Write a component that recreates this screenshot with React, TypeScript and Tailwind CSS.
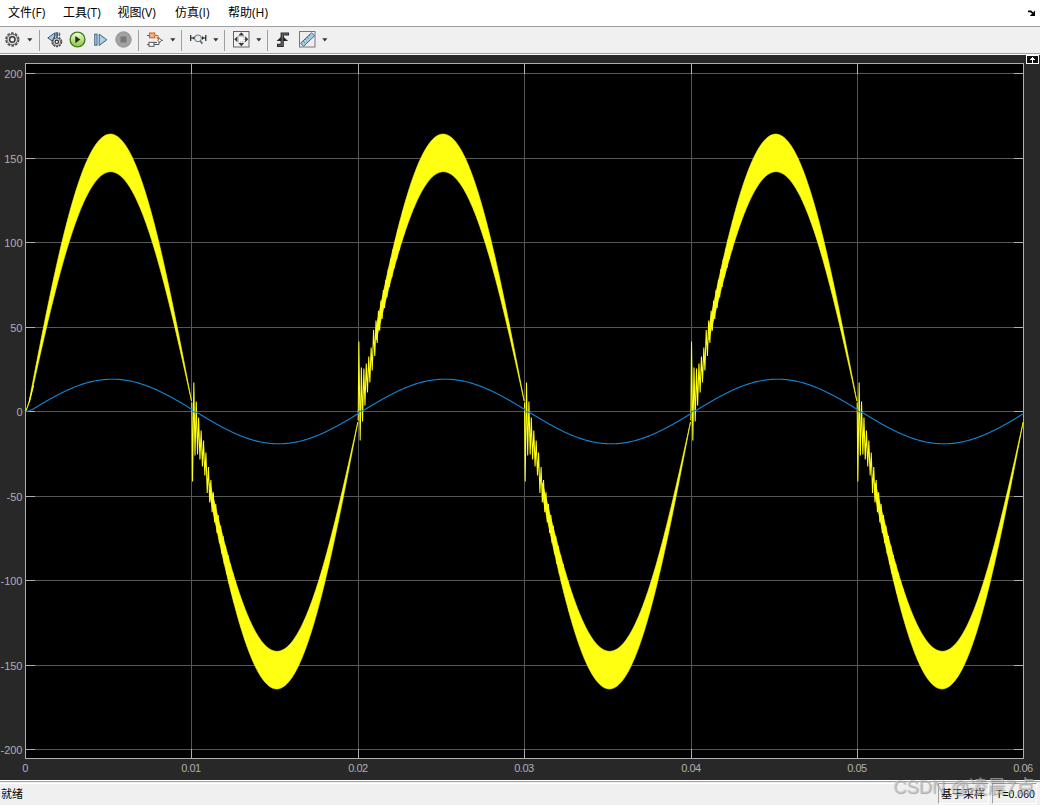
import React from "react";

const X0 = 25.5;
const Y0 = 411.5;
const HALF = 166.33;

type Pt = [number, number];

const path = (pts: Pt[]) =>
  pts.map(([x, y], i) => `${i ? "L" : "M"}${x.toFixed(2)} ${y.toFixed(2)}`).join("");

const wave = (amp: number, dx: number, shift: number) =>
  amp * Math.sin((Math.PI * (dx - shift)) / HALF);

const RINGING: Pt[] = [
  [0, -9], [0.7, 70], [2, -29], [3.2, 44], [4.4, -10], [5.7, 43], [6.8, 6],
  [8.1, 48], [9.3, 19], [10.6, 55], [11.7, 29], [13, 64], [14.1, 41],
];

function halfCycle(n: number) {
  const sign = n % 2 === 0 ? -1 : 1;
  const left = X0 + n * HALF;
  const start = n === 0 ? 4 : 18;
  const outer: Pt[] = [];
  const inner: Pt[] = [];
  for (let d = start; d <= HALF; d += 0.5) {
    outer.push([left + d, Y0 + sign * wave(277.4, d, 1.7)]);
    inner.push([left + d, Y0 + sign * wave(239.8, d, 2)]);
  }
  const band = path([...outer, ...inner.reverse()]) + "Z";
  const line: Pt[] = [];
  if (n === 0) {
    line.push([left, Y0], [left + 2, Y0 - 4.5], [left + 4, Y0 - 11], [left + 8, Y0 - 26]);
  } else {
    RINGING.forEach(([d, v]) => line.push([left + d, Y0 + sign * v]));
    let k = 0;
    for (let d = 15.4; d < 46; d += 1.22) {
      const swing = 17 * Math.sin((Math.PI * d) / HALF) + 12 * Math.exp(-(d - 15) / 9);
      line.push([left + d, Y0 + sign * (wave(258, d, 1.9) + (k % 2 ? -swing : swing))]);
      k++;
    }
  }
  return { band, line: path(line) };
}

const halves = [0, 1, 2, 3, 4, 5].map(halfCycle);

const current: Pt[] = [];
for (let n = 0; n < 6; n++) {
  const sign = n % 2 === 0 ? -1 : 1;
  const left = X0 + n * HALF;
  if (n === 0) current.push([left, Y0], [left + 3, Y0 - 0.5], [left + 7, Y0 - 2]);
  else current.push([left, Y0 - sign * 2.4], [left + 1, Y0], [left + 4, Y0 + sign * 0.6]);
  for (let d = n === 0 ? 9 : 6; d < HALF; d += 1)
    current.push([left + d, Y0 + sign * wave(32.3, d, 3.6)]);
}
current.push([X0 + 6 * HALF, Y0 + 2.5]);

const yTicks: [string, number][] = [
  ["200", 73.5], ["150", 158.5], ["100", 242.5], ["50", 327.5], ["0", 411.5],
  ["-50", 496.5], ["-100", 580.5], ["-150", 665.5], ["-200", 749.5],
];
const xTicks: [string, number][] = [
  ["0", 25.5], ["0.01", 191.5], ["0.02", 358.5], ["0.03", 524.5],
  ["0.04", 691.5], ["0.05", 857.5], ["0.06", 1023.5],
];

function Scope() {
  return (
    <svg width="1040" height="725" viewBox="0 55 1040 725" className="block bg-[#282828]">
      <rect x="25" y="63" width="999" height="696" fill="#000" />
      <g stroke="#565656" shapeRendering="crispEdges">
        {yTicks.map(([t, y]) => <path key={t} d={`M26 ${y}H1023`} />)}
        {xTicks.slice(1, 6).map(([t, x]) => <path key={t} d={`M${x} 64V758`} />)}
      </g>
      <g stroke="#afafaf" fill="none" shapeRendering="crispEdges">
        {yTicks.map(([t, y]) => <path key={t} d={`M26 ${y}h9M1023 ${y}h-9`} />)}
        {xTicks.slice(1, 6).map(([t, x]) => <path key={t} d={`M${x} 64v10M${x} 758v-9`} />)}
        <rect x="25.5" y="63.5" width="998" height="695" />
      </g>
      {halves.map((h, i) => (
        <g key={i} stroke="#ffff11" strokeLinejoin="bevel">
          <path d={h.band} fill="#ffff11" strokeWidth=".7" />
          <path d={h.line} fill="none" strokeWidth="1.05" />
        </g>
      ))}
      <path d={path(current)} fill="none" stroke="#1483cf" strokeWidth="1.15" />
      <g fill="#afafaf" fontSize="11" fontFamily="'Liberation Sans', Arial, sans-serif">
        {yTicks.map(([t, y]) => <text key={t} x="22.5" y={y + 4} textAnchor="end">{t}</text>)}
        {xTicks.map(([t, x]) => <text key={t} x={x - 0.3} y="772" textAnchor="middle" textLength={t === "0" ? undefined : 20}>{t}</text>)}
      </g>
      <g shapeRendering="crispEdges">
        <rect x="1026.5" y="55.5" width="12" height="8" fill="#111" stroke="#fff" />
        <path d="M1032.5 57v6M1031 58.5h3M1030 59.5h5" stroke="#fff" fill="none" />
      </g>
    </svg>
  );
}

function Caret({ className }: { className: string }) {
  return (
    <svg width="6" height="4" viewBox="0 0 6 4" className={`shrink-0 ${className}`}>
      <path d="M.2 .2h5.2L2.8 3.4z" fill="#333" />
    </svg>
  );
}

function Sep({ className }: { className: string }) {
  return <div className={`h-[21px] w-px shrink-0 bg-[#a0a0a0] ${className}`} />;
}

function Gear() {
  return (
    <svg width="15" height="15" viewBox="0 0 15 15" className="mb-[2px] ml-[5px]">
      <circle cx="7.3" cy="7.5" r="6.3" fill="none" stroke="#555" strokeWidth="1.7" strokeDasharray="2.7 1.25" />
      <circle cx="7.3" cy="7.5" r="5.3" fill="#d9d9d9" stroke="#606060" />
      <circle cx="7.3" cy="7.5" r="2.7" fill="#f2f2f2" stroke="#3a3a3a" strokeWidth="1.5" />
    </svg>
  );
}

function Toolbar() {
  return (
    <div className="flex h-[26px] items-center bg-[#f0f0f0]">
      <Gear />
      <Caret className="mb-px ml-[6.5px]" />
      <Sep className="ml-[6.5px]" />
      <svg width="16" height="16" viewBox="0 0 16 16" className="mb-px ml-[7px]">
        <path d="M.8 6L7.5 1v9.5z" fill="#a9cbe2" stroke="#345e80" />
        <path d="M9 4.5V.8h1.5v3.5M12.5 4V.8" fill="none" stroke="#345e80" strokeWidth="1.3" />
        <circle cx="9.8" cy="9.8" r="4.7" fill="none" stroke="#4b4b4b" strokeWidth="1.5" strokeDasharray="2 .95" />
        <circle cx="9.8" cy="9.8" r="3.9" fill="#d8d8d8" stroke="#555" strokeWidth=".9" />
        <circle cx="9.8" cy="9.8" r="1.7" fill="#fff" stroke="#303030" strokeWidth="1.2" />
      </svg>
      <svg width="17" height="17" viewBox="0 0 17 17" className="mb-px ml-[6px]">
        <defs>
          <linearGradient id="play" x1="0" y1="0" x2="0" y2="1">
            <stop offset="0" stopColor="#f5ffe9" /><stop offset=".55" stopColor="#b5df7c" /><stop offset="1" stopColor="#8cca48" />
          </linearGradient>
        </defs>
        <circle cx="8.5" cy="8.5" r="7.4" fill="url(#play)" stroke="#487b1c" strokeWidth="1.4" />
        <path d="M6.3 4.9l5 3.6-5 3.7z" fill="#202b1c" />
      </svg>
      <svg width="14" height="14" viewBox="0 0 14 14" className="mb-px ml-[7.5px]">
        <rect x=".8" y="1.2" width="2.2" height="11" fill="#b5d7ec" stroke="#345e80" />
        <path d="M5.2 1.2v11.2l7.6-5.6z" fill="#b0d2e9" stroke="#345e80" />
      </svg>
      <svg width="17" height="17" viewBox="0 0 17 17" className="mb-px ml-[7px]">
        <circle cx="8.5" cy="8.5" r="7.7" fill="#a2a2a2" stroke="#929292" />
        <rect x="5.5" y="5.5" width="6" height="6" fill="#777" />
      </svg>
      <Sep className="ml-[6px]" />
      <svg width="16" height="16" viewBox="0 0 16 16" className="mb-px ml-[8px]">
        <path d="M0 3.5h2M0 12.5h2M7 12.5h5v-3" stroke="#555" fill="none" />
        <path d="M8 3.5h3V6" stroke="#c76223" fill="none" />
        <rect x="2.5" y="1" width="5.3" height="4.8" fill="#fbb171" stroke="#c85f1d" />
        <rect x="2" y="10.3" width="5" height="4" fill="#fff" stroke="#555" />
        <path d="M12.7 6.3l1.8 2-1.8 2-1.8-2z" fill="#fff" stroke="#555" />
        <path d="M14.5 8.3H16M7 10.5h3" stroke="#555" />
        <path d="M9 5.5h4l-2 2z" fill="#c85f1d" />
      </svg>
      <Caret className="mb-px ml-[7px]" />
      <Sep className="ml-[5px]" />
      <svg width="17" height="14" viewBox="0 0 17 14" className="ml-[8px]">
        <path d="M.7 2v6M15.8 2v6M1 5h3.5M12 5h4" stroke="#222" strokeWidth="1.2" />
        <path d="M4.5 3v4L2.5 5zM12 3v4l2-2z" fill="#222" />
        <circle cx="8" cy="5.3" r="3.4" fill="#e1edf4" stroke="#707070" />
        <path d="M10.2 7.8l2.2 3" stroke="#666" strokeWidth="1.7" />
      </svg>
      <Caret className="mb-px ml-[6px]" />
      <Sep className="ml-[5px]" />
      <svg width="17" height="17" viewBox="0 0 17 17" className="mb-px ml-[8px]">
        <rect x=".5" y=".5" width="15.5" height="15.5" fill="#f2f2f2" stroke="#646464" />
        <rect x="5.5" y="5.5" width="5.5" height="5.5" fill="#fff" stroke="#999" strokeDasharray="1 1" />
        <path d="M8.3 1.2l3 3.2h-6zM8.3 15.3l3-3.2h-6zM1.2 8.3l3.2-3v6zM15.3 8.3l-3.2-3v6z" fill="#3b3b3b" />
      </svg>
      <Caret className="mb-px ml-[6px]" />
      <Sep className="ml-[5px]" />
      <svg width="14" height="17" viewBox="0 0 14 17" className="mb-px ml-[8px]">
        <path d="M1 14.3h5.2V3H13" fill="none" stroke="#262626" strokeWidth="3.2" />
        <path d="M.5 10.1L6.3 4.8l5.8 5.3z" fill="#262626" />
        <path d="M2 14.3h4.2V3H12" fill="none" stroke="#747474" strokeWidth="1.1" />
      </svg>
      <svg width="17" height="17" viewBox="0 0 17 17" className="mb-px ml-[9px]">
        <rect x=".5" y=".5" width="15.5" height="15.5" fill="#eee" stroke="#777" />
        <path d="M1.5 12.3L12.5 1.8l3 3L4.7 15.2z" fill="#a8cce1" stroke="#436b85" />
        <path d="M4 10l1.8 1.5M6 8l1.3 1M8 6l1.8 1.5M10 4l1.3 1" stroke="#436b85" strokeWidth=".8" />
      </svg>
      <Caret className="mb-px ml-[6px]" />
    </div>
  );
}

export default function App() {
  return (
    <div className="relative flex h-[805px] w-[1040px] flex-col overflow-hidden bg-[#f0f0f0] font-['Open_Sans','Noto_Sans_CJK_SC',sans-serif] text-[12px] text-black">
      <nav className="flex h-[26px] items-center bg-white pl-2 leading-[26px]">
        <span className="w-[55px] whitespace-nowrap">文件(F)</span>
        <span className="w-[54.5px] whitespace-nowrap">工具(T)</span>
        <span className="w-[57.5px] whitespace-nowrap">视图(V)</span>
        <span className="w-[53px] whitespace-nowrap">仿真(I)</span>
        <span className="whitespace-nowrap">帮助(H)</span>
        <svg width="8" height="7" viewBox="0 0 8 7" className="mr-[4px] ml-auto">
          <path d="M0 1.3h2.8l2.2 2" fill="none" stroke="#000" strokeWidth="1.8" />
          <path d="M7 .5V6H1.8z" fill="#000" />
        </svg>
      </nav>
      <div className="h-px shrink-0 bg-[#a0a0a0]" />
      <Toolbar />
      <div className="h-px shrink-0 bg-[#a0a0a0]" />
      <div className="h-px shrink-0 bg-white" />
      <Scope />
      <footer className="flex h-[25px] justify-between border-t border-white text-[11px] leading-[20px]">
        <div className="flex flex-1 border-t border-[#a0a0a0] pt-px">
          <span className="flex-1 border-t border-white pl-px">就绪</span>
          <div className="mr-[3px] mb-px flex gap-[3px]">
            <span className="w-[51px] border border-t-[#a0a0a0] border-r-white border-b-white border-l-[#a0a0a0] pl-[2px] whitespace-nowrap">基于采样</span>
            <span className="w-[45px] border border-t-[#a0a0a0] border-r-white border-b-white border-l-[#a0a0a0] pl-[3px] font-['Liberation_Sans',sans-serif] text-[10.5px] whitespace-nowrap">T=0.060</span>
          </div>
        </div>
      </footer>
      <div className="absolute top-[774px] left-[893px] font-['Liberation_Sans','Noto_Sans_CJK_SC',sans-serif] text-[18.4px] leading-[26px] whitespace-nowrap text-[#c8c8c8]/60 [text-shadow:1px_1px_1px_#77777799]">
        CSDN @凌晨7点
      </div>
    </div>
  );
}
